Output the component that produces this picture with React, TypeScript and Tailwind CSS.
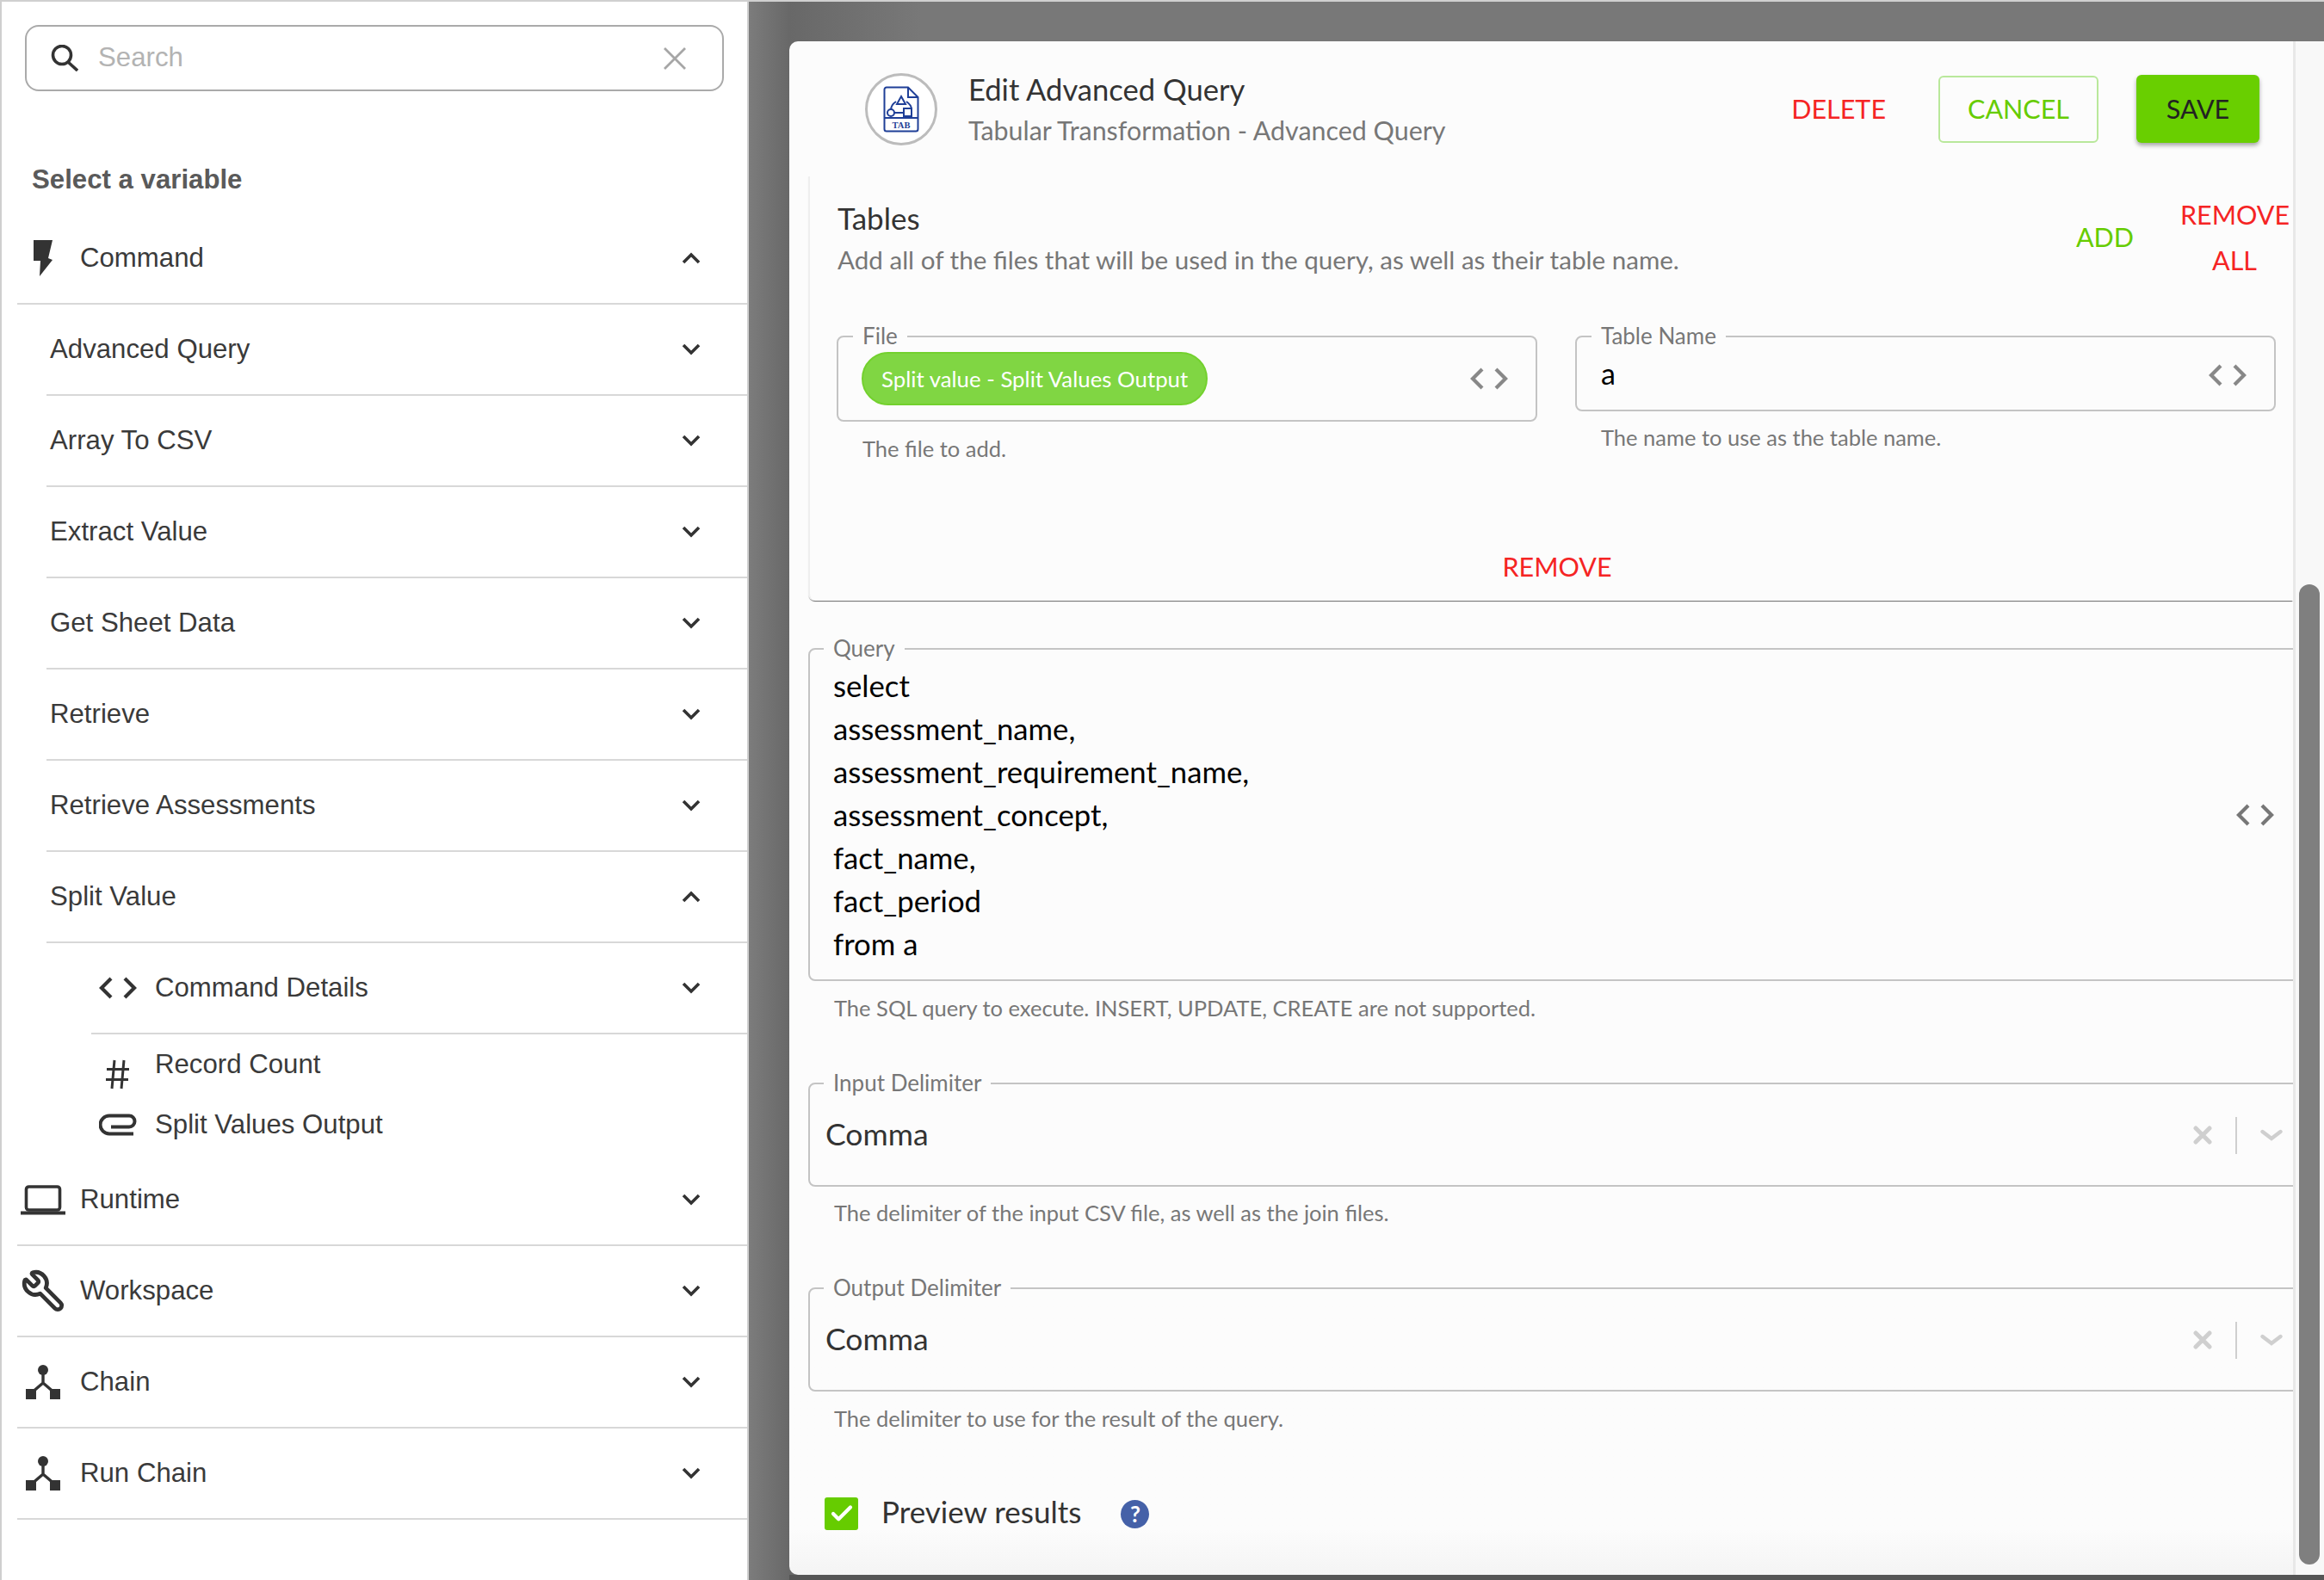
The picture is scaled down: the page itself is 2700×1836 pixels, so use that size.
import { Check, Wrench } from "lucide-react";

const Chevron = ({ up = false }: { up?: boolean }) => (
  <svg width="22" height="14" viewBox="0 0 22 14" fill="none" stroke="#333" strokeWidth="3.6" className="shrink-0">
    <path d={up ? "M2 12 L11 3 L20 12" : "M2 2 L11 11 L20 2"} />
  </svg>
);

const CodeIcon = ({ color = "#333" }: { color?: string }) => (
  <svg width="44" height="26" viewBox="0 0 44 26" fill="none" stroke={color} strokeWidth="4.2" className="shrink-0">
    <path d="M14 2 L3 13 L14 24" />
    <path d="M30 2 L41 13 L30 24" />
  </svg>
);

const SearchIcon = () => (
  <svg width="32" height="31" viewBox="0 0 32 31" fill="none" stroke="#333" strokeWidth="3.6" className="shrink-0">
    <circle cx="13" cy="12" r="10.5" />
    <path d="M20 20 L31 30" />
  </svg>
);

const Bolt = () => (
  <svg width="22" height="42" viewBox="0 0 22 42">
    <path d="M0 0 H22 L17 21 L22 23 L7 42 L8 24 H0 Z" fill="#333" />
  </svg>
);

const Laptop = () => (
  <svg width="52" height="35" viewBox="0 0 52 35" fill="none" stroke="#333">
    <rect x="6.5" y="2" width="39" height="27" rx="3" strokeWidth="3.6" />
    <path d="M0 32.5 H52" strokeWidth="4" />
  </svg>
);

const ChainIcon = () => (
  <svg width="40" height="40" viewBox="0 0 40 40" fill="#333">
    <circle cx="20" cy="6" r="6" />
    <path d="M20 10 V21 L6 33 M20 21 L34 33" stroke="#333" strokeWidth="3.4" fill="none" />
    <rect x="0" y="28" width="12" height="12" />
    <rect x="28" y="28" width="12" height="12" />
  </svg>
);

const HashIcon = () => (
  <svg width="28" height="35" viewBox="0 0 28 35" fill="none" stroke="#333" strokeWidth="3">
    <path d="M10 1 L7 34 M21 1 L18 34 M1 11.5 H27 M0 23.5 H26" />
  </svg>
);

const ClipIcon = () => (
  <svg width="44" height="26" viewBox="0 0 44 26" fill="none" stroke="#333" strokeWidth="4">
    <path d="M40 23.5 H12 a10 10 0 0 1 0 -21 H35 a6.5 6.5 0 0 1 0 13 H14" />
  </svg>
);

const Row = ({ label, icon, up, indent = 0 }: { label: string; icon?: React.ReactNode; up?: boolean; indent?: number }) => {
  if (indent === 0) {
    return (
      <div className="ml-[18px] flex h-[106px] items-center border-b-2 border-[#d8d8d8] pr-[54px]">
        <div className="flex w-[60px] justify-center">{icon}</div>
        <span className="ml-[13px] flex-1">{label}</span>
        <Chevron up={up} />
      </div>
    );
  }
  if (indent === 1) {
    return (
      <div className="ml-[52px] flex h-[106px] items-center border-b-2 border-[#d8d8d8] pl-[4px] pr-[54px]">
        <span className="flex-1">{label}</span>
        <Chevron up={up} />
      </div>
    );
  }
  return (
    <div className="ml-[104px] flex h-[106px] items-center border-b-2 border-[#d8d8d8] pl-[9px] pr-[54px]">
      <div className="flex w-[44px] justify-center">{icon}</div>
      <span className="ml-[21px] flex-1">{label}</span>
      <Chevron up={up} />
    </div>
  );
};

const commands = ["Advanced Query", "Array To CSV", "Extract Value", "Get Sheet Data", "Retrieve", "Retrieve Assessments"];

const Sidebar = () => (
  <aside className="w-[870px] shrink-0 border-x-2 border-[#cfcfcf] bg-white font-['Liberation_Sans',sans-serif] text-[31.2px] text-[#3a3a3a]">
    <div className="ml-[27px] mt-[27px] flex h-[77px] w-[812px] items-center rounded-[16px] border-2 border-[#aaaaaa] pl-[28px] pr-[42px]">
      <SearchIcon />
      <span className="ml-[23px] flex-1 text-[#b3b3b3]">Search</span>
      <svg width="26" height="26" viewBox="0 0 26 26" stroke="#a6a6a6" strokeWidth="2.8" fill="none">
        <path d="M1 1 L25 25 M25 1 L1 25" />
      </svg>
    </div>
    <div className="ml-[35px] mt-[83px] h-[40px] font-bold leading-[40px] text-[#5a5a5a]">Select a variable</div>
    <div className="mt-[19px]">
      <Row label="Command" icon={<Bolt />} up />
      {commands.map((c) => (
        <Row key={c} label={c} indent={1} />
      ))}
      <Row label="Split Value" indent={1} up />
      <Row label="Command Details" indent={2} icon={<CodeIcon />} />
      <div className="ml-[104px] flex h-[70px] items-center pl-[9px]">
        <div className="mt-[22px] flex w-[44px] justify-center">
          <HashIcon />
        </div>
        <span className="ml-[21px]">Record Count</span>
      </div>
      <div className="ml-[104px] flex h-[70px] items-center pl-[9px]">
        <div className="flex w-[44px] justify-center">
          <ClipIcon />
        </div>
        <span className="ml-[21px]">Split Values Output</span>
      </div>
      <Row label="Runtime" icon={<Laptop />} />
      <Row label="Workspace" icon={<Wrench size={52} strokeWidth={2.2} color="#333" className="-scale-x-100" />} />
      <Row label="Chain" icon={<ChainIcon />} />
      <Row label="Run Chain" icon={<ChainIcon />} />
    </div>
  </aside>
);

const TabIcon = () => (
  <div className="flex h-[84px] w-[84px] shrink-0 items-center justify-center rounded-full border-[3px] border-[#bcbcbc] bg-white">
    <svg width="42" height="54" viewBox="0 0 42 54" fill="none" stroke="#1f3f97" strokeWidth="2">
      <path d="M4 1.5 H29 L40.5 13 V50 a2.5 2.5 0 0 1 -2.5 2.5 H4 a2.5 2.5 0 0 1 -2.5 -2.5 V4 a2.5 2.5 0 0 1 2.5 -2.5 Z" />
      <path d="M29 1.5 V13 H40.5" />
      <path d="M1.5 37 H40.5" />
      <path d="M21 12 L26 21 H16 Z" />
      <path d="M15 18 Q9 22 9 28 M27 18 Q33 22 33 27" />
      <circle cx="9" cy="31" r="4" />
      <rect x="24" y="26" width="9" height="9" />
      <path d="M13 31 H24" />
      <text x="21" y="49" textAnchor="middle" fontFamily="Liberation Serif" fontWeight="700" fontSize="10.5" fill="#1f3f97" stroke="none">
        TAB
      </text>
    </svg>
  </div>
);

const Help = ({ children, pl = "pl-[30px]" }: { children: React.ReactNode; pl?: string }) => (
  <p className={`mt-[15px] h-[32px] text-[25.5px] leading-[32px] text-[#777] ${pl}`}>{children}</p>
);

const Legend = ({ children, ml = "ml-[16px]" }: { children: React.ReactNode; ml?: string }) => (
  <legend className={`${ml} h-[30px] px-[11px] text-[26px] leading-[28px] text-[#777]`}>{children}</legend>
);

const SelectField = ({ label }: { label: string }) => (
  <fieldset className="h-[135px] w-[1737px] shrink-0 rounded-[8px] border-2 border-[#c4c4c4]">
    <Legend>{label}</Legend>
    <div className="flex h-[90px] items-center pl-[18px] pr-[22px]">
      <span className="-mt-[2px] flex-1 text-[35.5px] text-[#333]">Comma</span>
      <svg width="22" height="22" viewBox="0 0 22 22" stroke="#cfcfcf" strokeWidth="5" strokeLinecap="round">
        <path d="M3 3 L19 19 M19 3 L3 19" />
      </svg>
      <div className="ml-[27px] h-[43px] w-[2px] bg-[#cfcfcf]" />
      <svg width="26" height="15" viewBox="0 0 26 15" fill="none" stroke="#cfcfcf" strokeWidth="4.4" strokeLinecap="round" className="ml-[27px]">
        <path d="M2.5 3 L13 11 L23.5 3" />
      </svg>
    </div>
  </fieldset>
);

const TextBtn = ({ children, className }: { children: React.ReactNode; className: string }) => (
  <button className={`text-[30.5px] uppercase ${className}`}>{children}</button>
);

const queryLines = [
  "select",
  "assessment_name,",
  "assessment_requirement_name,",
  "assessment_concept,",
  "fact_name,",
  "fact_period",
  "from a",
];

const Modal = () => (
  <section className="flex min-h-0 flex-1 overflow-hidden rounded-tl-[10px] rounded-bl-[10px] bg-linear-to-b from-[#fcfcfc] from-[97%] to-[#f4f4f4] font-['Lato',sans-serif]">
    <div className="w-[1747px] shrink-0 overflow-hidden">
      <header className="flex h-[157px] items-center pl-[88px] pr-[39px]">
        <TabIcon />
        <div className="ml-[36px] flex-1">
          <h1 className="h-[48px] text-[34.6px] leading-[50px] text-[#333]">Edit Advanced Query</h1>
          <p className="h-[48px] text-[30.4px] leading-[48px] text-[#777]">Tabular Transformation - Advanced Query</p>
        </div>
        <TextBtn className="text-[#f52424]">Delete</TextBtn>
        <button className="ml-[61px] h-[78px] w-[186px] rounded-[6px] border-2 border-[#b9e89b] text-[30.5px] text-[#66cc00]">CANCEL</button>
        <button className="ml-[44px] h-[79px] w-[143px] rounded-[6px] bg-[#69cf00] text-[30.5px] text-[#222] shadow-[0_3px_5px_rgba(0,0,0,0.35)]">SAVE</button>
      </header>

      <div className="ml-[22px] h-[493px] rounded-bl-[8px] border-l-2 border-[#efefef] shadow-[0_2px_1px_-1px_rgba(0,0,0,0.5),0_1px_1px_0_rgba(0,0,0,0.15)]">
        <div className="flex justify-between pr-[5px] pt-[19px]">
          <div className="pl-[32px] pt-[5px]">
            <h2 className="h-[48px] text-[35px] leading-[48px] text-[#333]">Tables</h2>
            <p className="h-[48px] text-[29.6px] leading-[50px] text-[#777]">
              Add all of the files that will be used in the query, as well as their table name.
            </p>
          </div>
          <div className="flex h-[106px] -translate-y-[1px] items-center">
            <TextBtn className="text-[#66cc00]">Add</TextBtn>
            <TextBtn className="ml-[54px] w-[126px] text-center leading-[53px] text-[#f52424]">Remove All</TextBtn>
          </div>
        </div>

        <div className="mt-[46px] flex gap-[44px] pl-[31px]">
          <div className="w-[814px]">
            <fieldset className="h-[114px] rounded-[8px] border-2 border-[#c4c4c4]">
              <Legend ml="ml-[17px]">File</Legend>
              <div className="mt-[3px] flex h-[62px] items-center justify-between pl-[27px] pr-[32px]">
                <span className="flex h-[62px] items-center rounded-full border-2 border-[#73d12e] bg-[#80d643] px-[21px] text-[25.8px] text-white">
                  Split value - Split Values Output
                </span>
                <CodeIcon color="#888" />
              </div>
            </fieldset>
            <Help>The file to add.</Help>
          </div>
          <div className="w-[814px]">
            <fieldset className="h-[102px] rounded-[8px] border-2 border-[#c4c4c4]">
              <Legend ml="ml-[17px]">Table Name</Legend>
              <div className="flex h-[60px] items-center justify-between pl-[28px] pr-[32px]">
                <span className="-mt-[5px] text-[34px] text-black">a</span>
                <CodeIcon color="#888" />
              </div>
            </fieldset>
            <p className="mt-[14px] h-[32px] pl-[30px] text-[25.5px] leading-[32px] text-[#777]">The name to use as the table name.</p>
          </div>
        </div>

        <div className="mt-[97px] pl-[13px] text-center">
          <TextBtn className="leading-[48px] text-[#f52424]">Remove</TextBtn>
        </div>
      </div>

      <div className="ml-[22px] mt-[41px]">
        <fieldset className="h-[401px] w-[1737px] rounded-[8px] border-2 border-[#c4c4c4]">
          <Legend>Query</Legend>
          <div className="flex items-center justify-between pl-[27px] pr-[32px] pt-[3px]">
            <div className="text-[34.7px] leading-[50px] text-black">
              {queryLines.map((l) => (
                <div key={l}>{l}</div>
              ))}
            </div>
            <CodeIcon color="#777" />
          </div>
        </fieldset>
        <Help>The SQL query to execute. INSERT, UPDATE, CREATE are not supported.</Help>

        <div className="mt-[57px]">
          <SelectField label="Input Delimiter" />
          <p className="mt-[14px] h-[32px] pl-[30px] text-[25.5px] leading-[32px] text-[#777]">
            The delimiter of the input CSV file, as well as the join files.
          </p>
        </div>
        <div className="mt-[57px]">
          <SelectField label="Output Delimiter" />
          <Help>The delimiter to use for the result of the query.</Help>
        </div>

        <div className="ml-[19px] mt-[76px] flex h-[38px] items-center">
          <div className="flex h-[38px] w-[39px] items-center justify-center rounded-[3px] bg-[#66cc00]">
            <Check size={30} strokeWidth={3.4} color="white" />
          </div>
          <span className="ml-[27px] -mt-[5px] text-[35px] text-[#333]">Preview results</span>
          <div className="ml-[46px] flex h-[33px] w-[33px] items-center justify-center rounded-full bg-[#4561a8] text-[26px] font-bold text-white">?</div>
        </div>
      </div>
    </div>
    <div className="flex-1 border-l-[3px] border-[#e8e8e8] bg-[#f8f8f8] pl-[4px] pt-[631px]">
      <div className="h-[1139px] w-[24px] rounded-full bg-[#7f7f7f]" />
    </div>
  </section>
);

export default function App() {
  return (
    <div className="flex h-[1836px] w-[2700px] overflow-hidden border-t-2 border-[#d0d0d0]">
      <Sidebar />
      <main className="flex h-full flex-1 flex-col bg-[linear-gradient(to_right,#7c7c7c,#686868_47px,#787878_200px)] pl-[47px] pt-[46px]">
        <Modal />
        <div className="h-[6px] shrink-0 bg-[#555555]" />
      </main>
    </div>
  );
}
